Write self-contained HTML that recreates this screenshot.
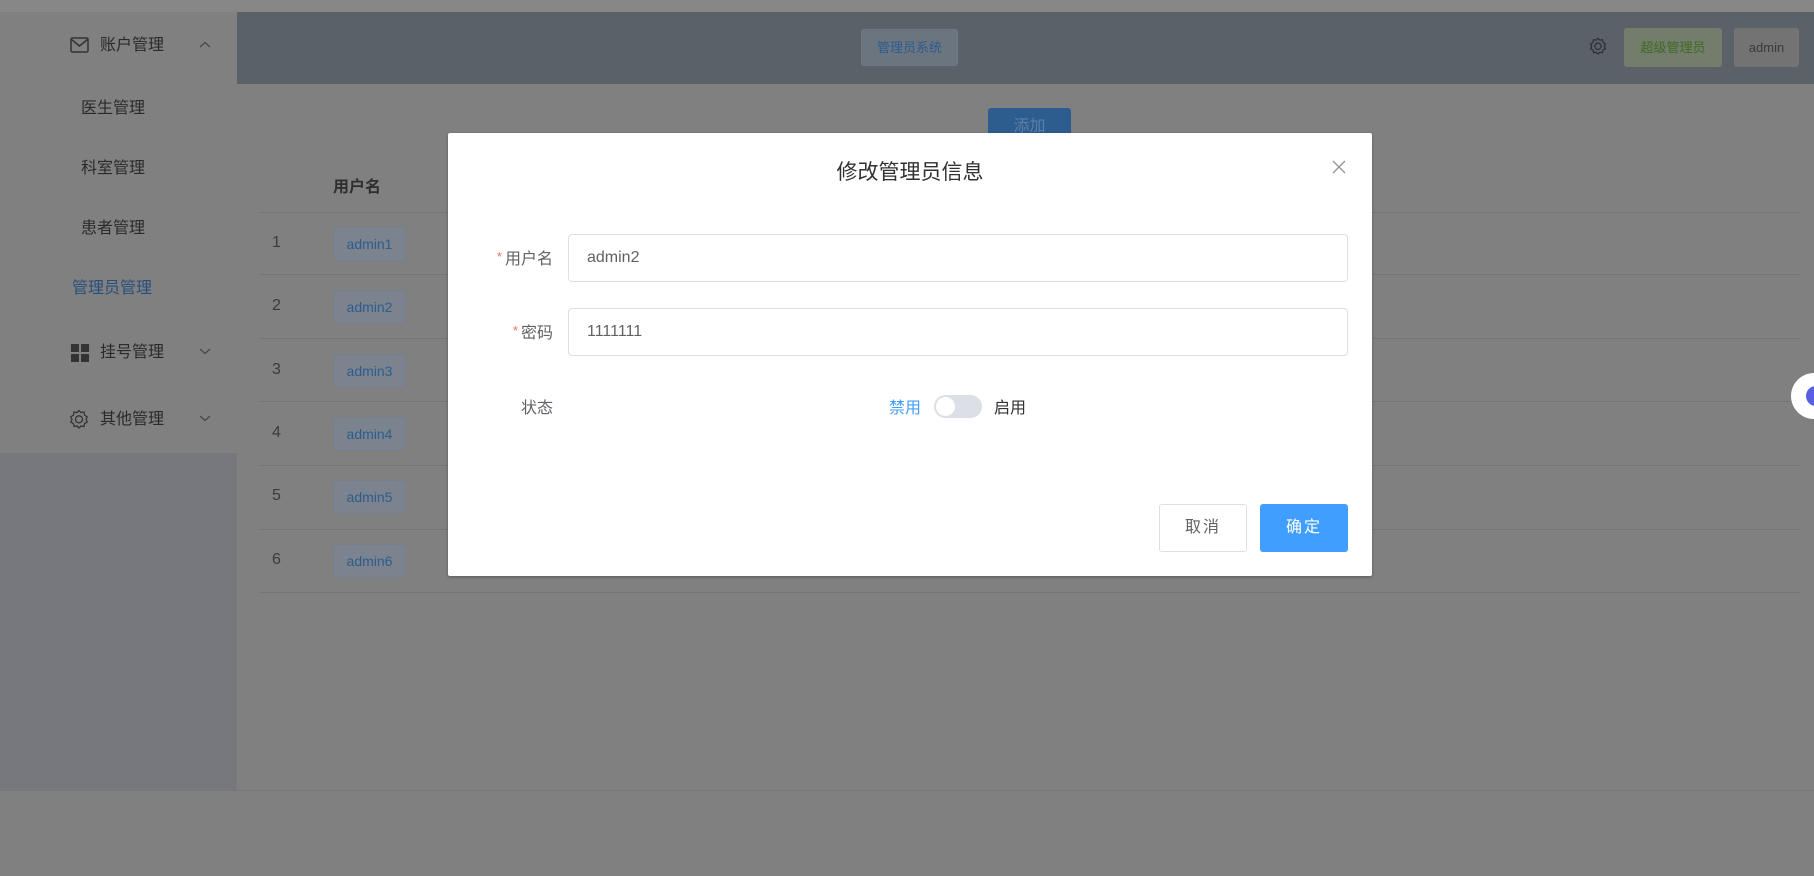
<!DOCTYPE html>
<html><head><meta charset="utf-8"><style>
*{box-sizing:border-box;margin:0;padding:0}
body{width:1814px;height:876px;overflow:hidden;background:#808080;font-family:"Liberation Sans","Noto Sans CJK SC",sans-serif;position:relative;color:#303133}
.abs{position:absolute}
.top{left:0;top:0;width:1814px;height:12px;background:#878787}
.side{left:0;top:12px;width:237px;height:778px;background:#76787d;border-right:1px solid #7a7a7a}
.menu{left:0;top:12px;width:237px;height:441px;background:#808080}
.mi{position:absolute;font-size:16px;color:#2a2a2a;line-height:20px}
.hdr{left:237px;top:12px;width:1577px;height:72px;background:#5b6169}
.btn{position:absolute;border-radius:3px;font-size:13px;text-align:center}
.line{position:absolute;left:259px;width:1541px;height:1px;background:#757575}
.num{position:absolute;left:272px;font-size:16px;color:#3a3a3a}
.tag{position:absolute;left:333px;width:73px;height:34px;background:#7b848e;border:1px solid #77808a;border-radius:4px;color:#2d5c8f;font-size:14px;text-align:center;line-height:32px}
.dlg{left:448px;top:133px;width:924px;height:443px;background:#fff;border-radius:2px;box-shadow:0 1px 3px rgba(0,0,0,.3)}
.lbl{position:absolute;font-size:16px;color:#606266;text-align:right;width:100px}
.lbl b{color:#f56c6c;font-weight:normal;font-size:13px;margin-right:3px;vertical-align:3px}
.inp{position:absolute;left:120px;width:780px;height:48px;border:1px solid #dcdfe6;border-radius:4px;font-size:16px;color:#606266;padding-left:18px;line-height:46px}
</style></head><body>
<div class="abs top"></div>
<div class="abs side"></div>
<div class="abs menu"></div>
<svg class="abs" style="left:70px;top:37px" width="19" height="16" viewBox="0 0 19 16"><rect x="1" y="1" width="17" height="14" rx="1.5" fill="none" stroke="#333" stroke-width="1.5"/><path d="M1.5 2.5 L9.5 9 L17.5 2.5" fill="none" stroke="#333" stroke-width="1.5"/></svg>
<div class="mi" style="left:100px;top:36px">账户管理</div>
<svg class="abs" style="left:199px;top:41px" width="12" height="8"><path d="M1 6 L6 1.5 L11 6" fill="none" stroke="#444" stroke-width="1.2"/></svg>
<div class="mi" style="left:81px;top:99px">医生管理</div>
<div class="mi" style="left:81px;top:159px">科室管理</div>
<div class="mi" style="left:81px;top:219px">患者管理</div>
<div class="mi" style="left:72px;top:279px;color:#284f7d">管理员管理</div>
<svg class="abs" style="left:71px;top:344px" width="18" height="18"><rect x="0" y="0" width="8" height="8" fill="#333"/><rect x="10" y="0" width="8" height="8" fill="#333"/><rect x="0" y="10" width="8" height="8" fill="#333"/><rect x="10" y="10" width="8" height="8" fill="#333"/></svg>
<div class="mi" style="left:100px;top:343px">挂号管理</div>
<svg class="abs" style="left:199px;top:347px" width="12" height="8"><path d="M1 2 L6 6.5 L11 2" fill="none" stroke="#444" stroke-width="1.2"/></svg>
<svg class="abs" style="left:69px;top:409px" width="20" height="20" viewBox="0 0 20 20"><path d="M10 1.5 L12 3.5 L15 3 L15.5 6 L18.3 8 L17 10.5 L18.3 13 L15.5 14.5 L15 17.5 L12 17 L10 19 L8 17 L5 17.5 L4.5 14.5 L1.7 13 L3 10.5 L1.7 8 L4.5 6 L5 3 L8 3.5 Z" fill="none" stroke="#333" stroke-width="1.3"/><circle cx="10" cy="10.3" r="3.5" fill="none" stroke="#333" stroke-width="1.3"/></svg>
<div class="mi" style="left:100px;top:410px">其他管理</div>
<svg class="abs" style="left:199px;top:414px" width="12" height="8"><path d="M1 2 L6 6.5 L11 2" fill="none" stroke="#444" stroke-width="1.2"/></svg>

<div class="abs hdr"></div>
<div class="btn" style="left:861px;top:29px;width:97px;height:37px;background:#6a7580;border:1px solid #6f7882;color:#2d5c8f;line-height:35px">管理员系统</div>
<svg class="abs" style="left:1589px;top:37px" width="18" height="18" viewBox="0 0 20 20"><path d="M10 1.5 L12 3.5 L15 3 L15.5 6 L18.3 8 L17 10.5 L18.3 13 L15.5 14.5 L15 17.5 L12 17 L10 19 L8 17 L5 17.5 L4.5 14.5 L1.7 13 L3 10.5 L1.7 8 L4.5 6 L5 3 L8 3.5 Z" fill="none" stroke="#2a2e33" stroke-width="1.3"/><circle cx="10" cy="10.3" r="3.5" fill="none" stroke="#2a2e33" stroke-width="1.3"/></svg>
<div class="btn" style="left:1624px;top:28px;width:98px;height:39px;background:#747c6c;color:#3e6b22;line-height:39px">超级管理员</div>
<div class="btn" style="left:1734px;top:28px;width:65px;height:39px;background:#737373;color:#3a3a3a;line-height:39px">admin</div>

<div class="btn" style="left:988px;top:108px;width:83px;height:30px;background:#2d5c8f;color:#5d7ea8;font-size:16px;line-height:38px">添加</div>
<div class="abs" style="left:333px;top:173px;font-size:16px;font-weight:bold;color:#2f2f2f">用户名</div>
<div class="line" style="top:212px"></div>
<div class="line" style="top:274px"></div>
<div class="line" style="top:338px"></div>
<div class="line" style="top:401px"></div>
<div class="line" style="top:465px"></div>
<div class="line" style="top:529px"></div>
<div class="line" style="top:592px"></div>
<div class="abs" style="left:0;top:790px;width:1814px;height:1px;background:#777"></div>
<div class="num" style="top:234px">1</div><div class="tag" style="top:227px">admin1</div>
<div class="num" style="top:297px">2</div><div class="tag" style="top:290px">admin2</div>
<div class="num" style="top:361px">3</div><div class="tag" style="top:354px">admin3</div>
<div class="num" style="top:424px">4</div><div class="tag" style="top:417px">admin4</div>
<div class="num" style="top:487px">5</div><div class="tag" style="top:480px">admin5</div>
<div class="num" style="top:551px">6</div><div class="tag" style="top:544px">admin6</div>

<div class="abs" style="left:1791px;top:373px;width:50px;height:46px;border-radius:23px;background:#fff"></div>
<div class="abs" style="left:1806px;top:386px;width:20px;height:20px;border-radius:10px;background:#5a5ee0"></div>

<div class="abs dlg">
  <div class="abs" style="left:0;width:924px;top:23px;text-align:center;font-size:21px;color:#303133">修改管理员信息</div>
  <svg class="abs" style="left:884px;top:27px" width="14" height="14"><path d="M1 1 L13 13 M13 1 L1 13" stroke="#909399" stroke-width="1.3"/></svg>
  <div class="lbl" style="left:5px;top:112px"><b>*</b>用户名</div>
  <div class="inp" style="top:101px">admin2</div>
  <div class="lbl" style="left:5px;top:186px"><b>*</b>密码</div>
  <div class="inp" style="top:175px">1111111</div>
  <div class="lbl" style="left:5px;top:261px">状态</div>
  <div class="abs" style="left:441px;top:261px;font-size:16px;color:#409eff">禁用</div>
  <div class="abs" style="left:486px;top:262px;width:48px;height:23px;border-radius:12px;background:#dcdfe6"></div>
  <div class="abs" style="left:488px;top:264px;width:19px;height:19px;border-radius:10px;background:#fff"></div>
  <div class="abs" style="left:546px;top:261px;font-size:16px;color:#303133">启用</div>
  <div class="btn" style="left:711px;top:371px;width:88px;height:48px;border:1px solid #dcdfe6;background:#fff;color:#606266;font-size:16px;line-height:46px;letter-spacing:2px">取消</div>
  <div class="btn" style="left:812px;top:371px;width:88px;height:48px;background:#409eff;color:#fff;font-size:16px;line-height:48px;letter-spacing:2px">确定</div>
</div>
</body></html>
